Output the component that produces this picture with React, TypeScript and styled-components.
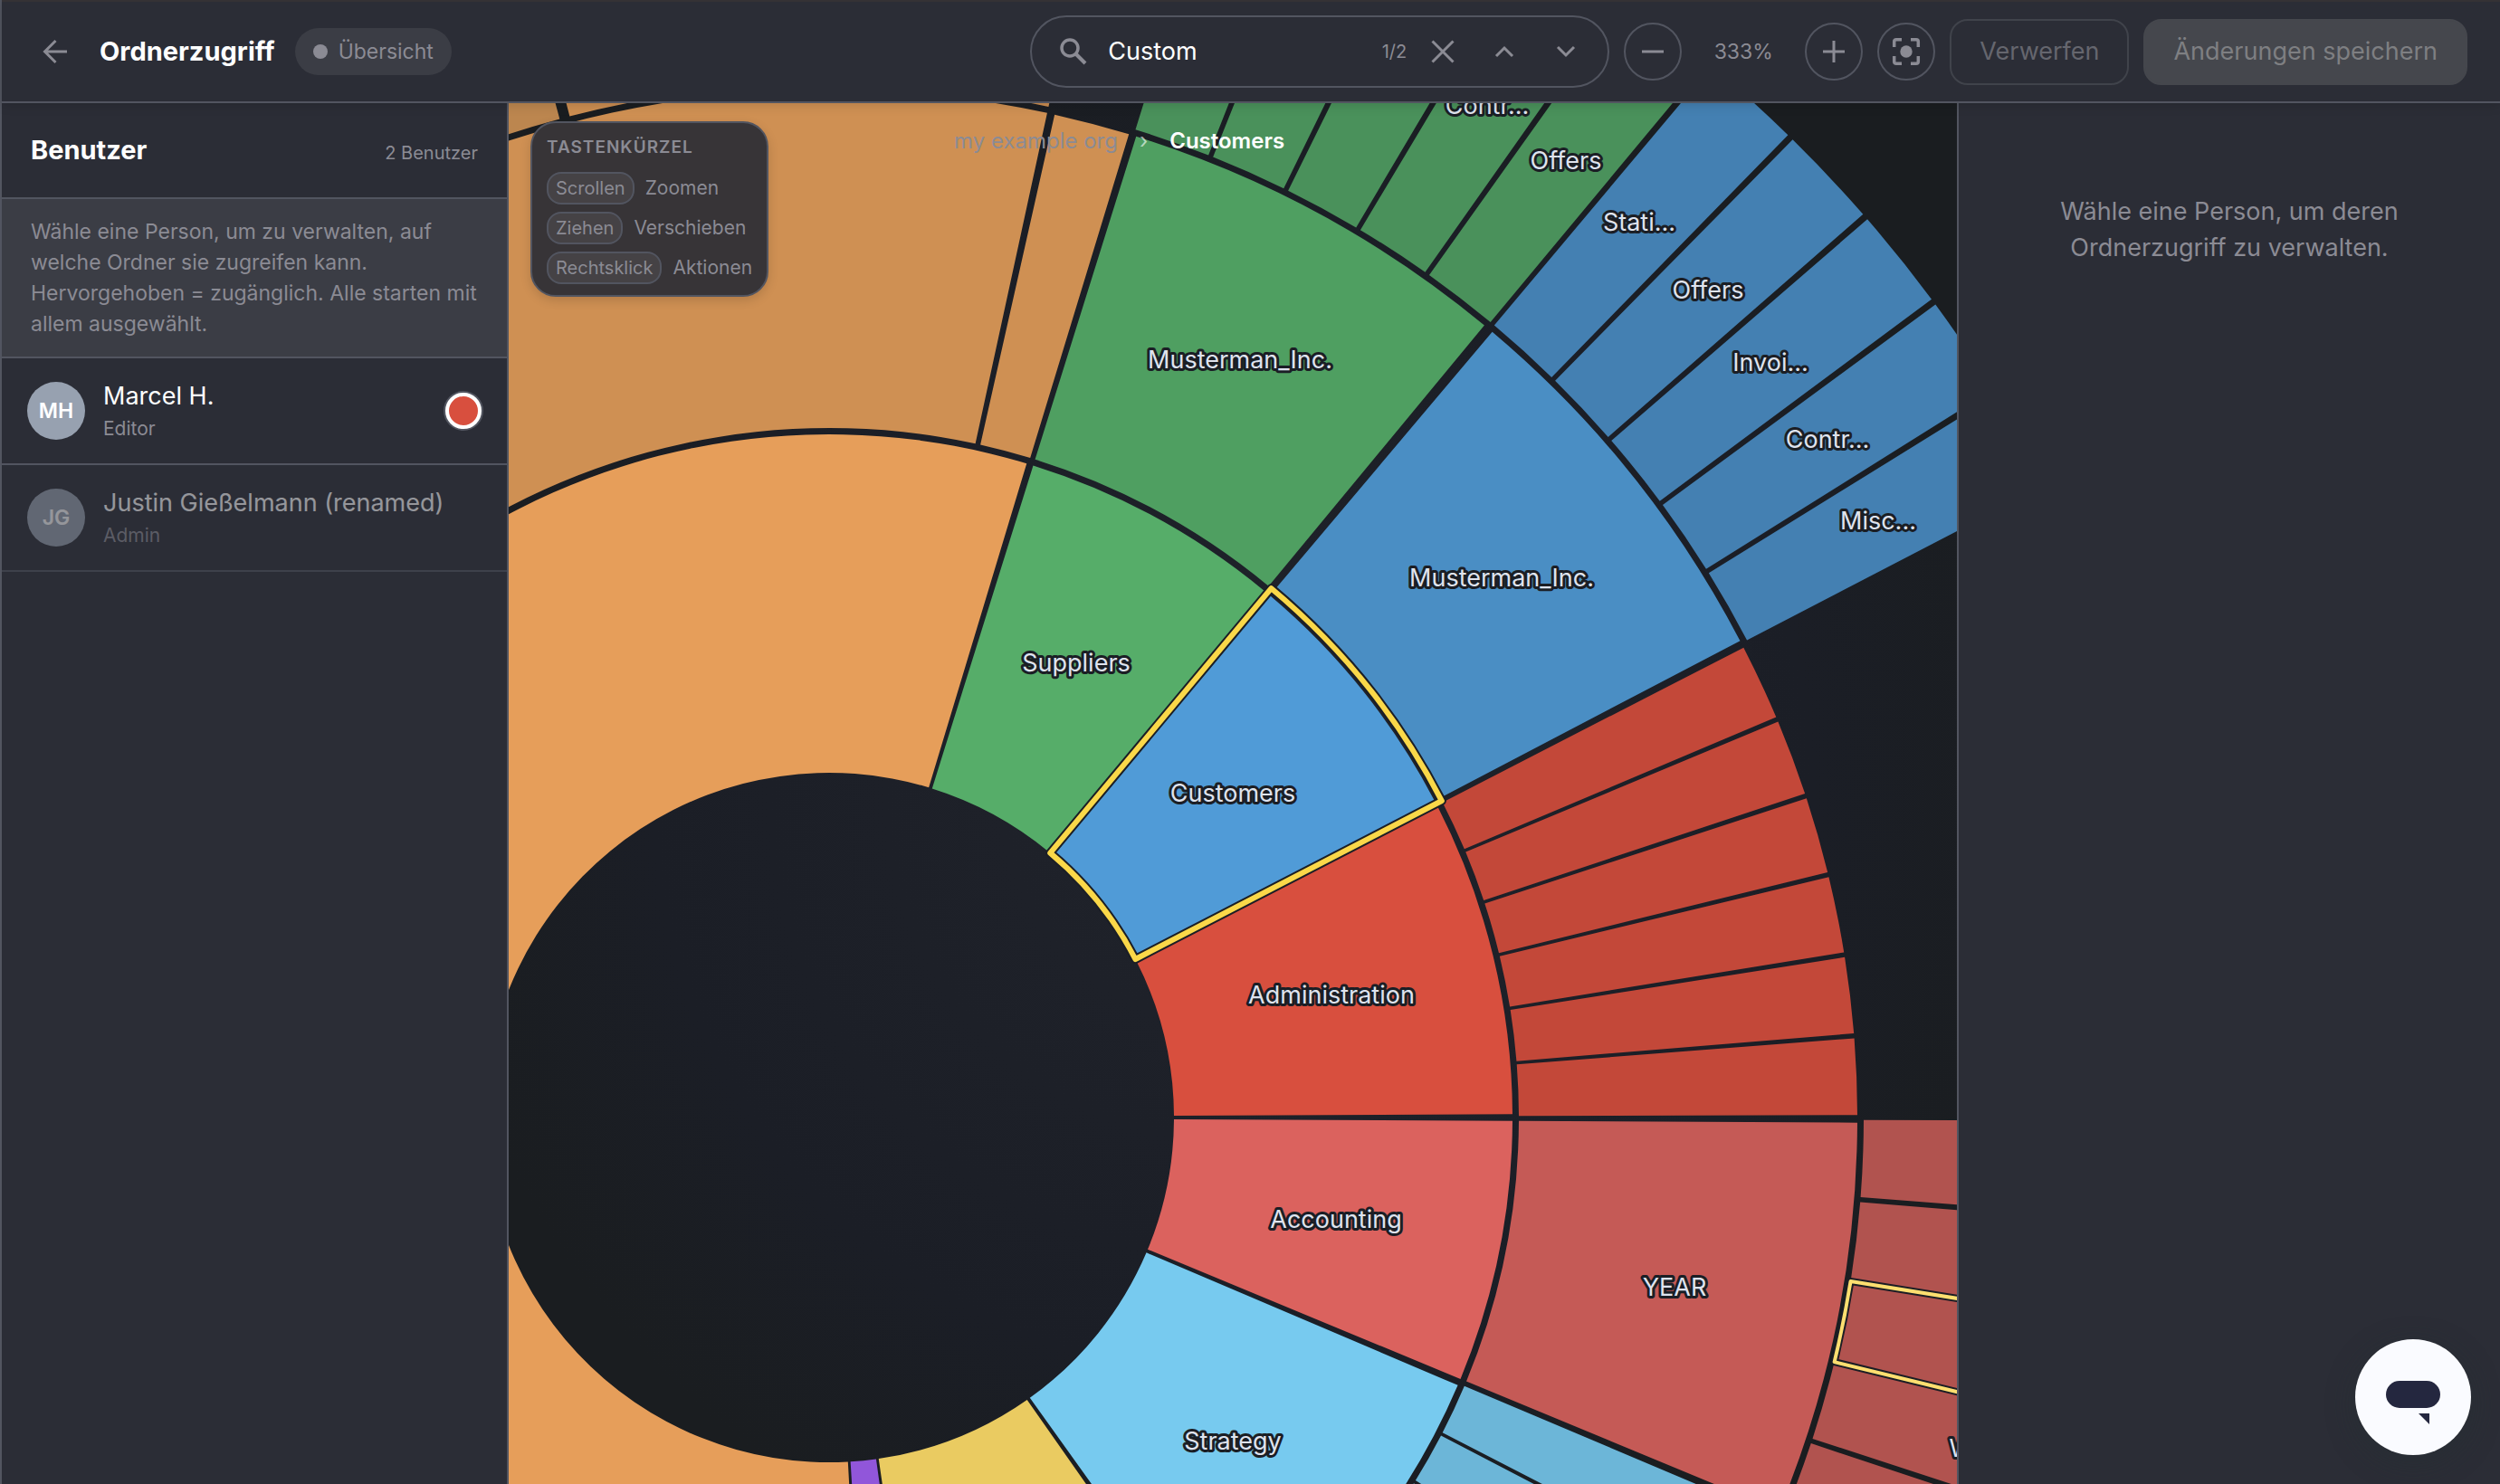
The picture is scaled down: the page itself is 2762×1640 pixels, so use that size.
import React, { useState } from "react";
import styled, { createGlobalStyle } from "styled-components";

const color = {
  panel: "#2b2d36",
  raised: "#3b3d45",
  border: "#525560",
  muted: "#8b8b94",
  text: "#ffffff",
  gap: "#1b1e25",
  match: "#fad849",
};

const GlobalStyle = createGlobalStyle`
  *, *::before, *::after { box-sizing: border-box; }
  body {
    margin: 0;
    background: ${color.panel};
    color: ${color.text};
    font-family: Inter, "Liberation Sans", sans-serif;
    font-size: 27px;
    line-height: 40px;
  }
  button, input { font: inherit; color: inherit; }
  h1, h2, p, ul, dl, dd { margin: 0; padding: 0; }
`;

const Page = styled.div`
  display: flex;
  flex-direction: column;
  height: 100vh;
  border-left: 2px solid ${color.border};
`;

/* ---------- top bar ---------- */

const TopBar = styled.header`
  position: relative;
  z-index: 2;
  display: flex;
  align-items: center;
  justify-content: space-between;
  flex: none;
  height: 114px;
  padding: 0 36px 0 34px;
  background: ${color.panel};
  border-top: 2px solid #353235;
  border-bottom: 2px solid ${color.border};
  box-shadow: 0 2px 12px rgba(0, 0, 0, 0.14);
`;

const TitleGroup = styled.div`
  display: flex;
  align-items: center;
`;

const Title = styled.h1`
  margin: 0 22px 0 24px;
  font-size: 29px;
  font-weight: 700;
`;

const PlainButton = styled.button<{ $width: number }>`
  display: flex;
  align-items: center;
  justify-content: center;
  width: ${(p) => p.$width}px;
  height: 60px;
  padding: 0;
  border: 0;
  background: none;
  color: ${color.muted};
  cursor: pointer;
`;

const StatusPill = styled.span`
  display: flex;
  align-items: center;
  gap: 12px;
  height: 52px;
  padding: 0 20px;
  border-radius: 26px;
  background: ${color.raised};
  color: ${color.muted};
  font-size: 23px;
`;

const StatusDot = styled.span`
  width: 16px;
  height: 16px;
  border-radius: 50%;
  background: ${color.muted};
`;

const Tools = styled.div`
  display: flex;
  align-items: center;
  gap: 16px;
`;

const SearchBox = styled.form`
  display: flex;
  align-items: center;
  gap: 8px;
  width: 640px;
  height: 80px;
  padding: 0 16px 0 30px;
  border: 2px solid ${color.border};
  border-radius: 40px;
  color: ${color.muted};
`;

const SearchLabel = styled.label`
  display: flex;
  flex: none;
  margin-right: 14px;
`;

const SearchInput = styled.input`
  flex: 1;
  min-width: 0;
  padding: 0;
  border: 0;
  outline: 0;
  background: none;
  color: ${color.text};
`;

const MatchCount = styled.output`
  margin-right: 2px;
  font-size: 20px;
`;

const RoundButton = styled.button`
  display: flex;
  align-items: center;
  justify-content: center;
  width: 64px;
  height: 64px;
  padding: 0;
  border: 2px solid ${color.border};
  border-radius: 50%;
  background: none;
  color: ${color.muted};
  cursor: pointer;
`;

const ZoomValue = styled.output`
  width: 104px;
  color: ${color.muted};
  font-size: 23px;
  text-align: center;
`;

const ActionButton = styled.button<{ $filled?: boolean }>`
  height: 73px;
  padding: 0 31px;
  border: 2px solid ${(p) => (p.$filled ? "#45474d" : "#40434b")};
  border-radius: 20px;
  background: ${(p) => (p.$filled ? "#45474d" : "none")};
  color: ${(p) => (p.$filled ? "#7e7f82" : "#65666e")};
`;

/* ---------- body ---------- */

const Body = styled.div`
  display: grid;
  grid-template-columns: 560px minmax(0, 1fr) 600px;
  flex: 1;
  min-height: 0;
`;

const UserPanel = styled.aside`
  border-right: 2px solid ${color.border};
`;

const UserPanelHeader = styled.div`
  display: flex;
  align-items: baseline;
  justify-content: space-between;
  height: 106px;
  padding: 32px 32px 0;
  border-bottom: 2px solid ${color.border};
`;

const PanelTitle = styled.h2`
  font-size: 29px;
  font-weight: 700;
`;

const UserCount = styled.span`
  color: ${color.muted};
  font-size: 20px;
`;

const Hint = styled.p`
  padding: 19px 28px 19px 32px;
  border-bottom: 2px solid ${color.border};
  background: ${color.raised};
  color: ${color.muted};
  font-size: 23px;
  line-height: 34px;
`;

const UserList = styled.ul`
  list-style: none;
`;

const UserButton = styled.button<{ $dimmed: boolean }>`
  display: flex;
  align-items: center;
  gap: 20px;
  width: 100%;
  height: 118px;
  padding: 0 28px;
  border: 0;
  border-bottom: 2px solid ${color.border};
  background: none;
  text-align: left;
  cursor: pointer;
  opacity: ${(p) => (p.$dimmed ? 0.5 : 1)};
`;

const Avatar = styled.span`
  flex: none;
  width: 64px;
  border-radius: 50%;
  background: #97a1b0;
  font-size: 23px;
  font-weight: 600;
  line-height: 64px;
  text-align: center;
`;

const UserText = styled.span`
  display: flex;
  flex: 1;
  flex-direction: column;
`;

const Role = styled.span`
  color: ${color.muted};
  font-size: 21px;
  line-height: 32px;
`;

const Swatch = styled.span`
  width: 40px;
  height: 40px;
  border: 4px solid #ffffff;
  border-radius: 50%;
  background: #d84f3e;
  box-shadow: 0 0 0 2px ${color.border};
`;

const Canvas = styled.main`
  position: relative;
  min-width: 0;
  overflow: hidden;
  background: radial-gradient(circle at 50% 50%, #20232b 0, #1b1e26 640px, #1a1d20 900px);
`;

const Chart = styled.svg`
  display: block;
  width: 100%;
  height: 100%;
`;

const SegmentLabel = styled.text`
  fill: #dfe3ee;
  stroke: ${color.gap};
  stroke-width: 6px;
  stroke-linejoin: round;
  paint-order: stroke;
  font-size: 27px;
  text-anchor: middle;
`;

const Shortcuts = styled.section`
  position: absolute;
  top: 20px;
  left: 24px;
  padding: 14px 16px 12px;
  border: 2px solid ${color.border};
  border-radius: 28px;
  background: #373437;
  color: ${color.muted};
  font-size: 21px;
  box-shadow: 0 4px 12px rgba(0, 0, 0, 0.15);
`;

const ShortcutsTitle = styled.h2`
  margin-bottom: 14px;
  font-size: 19px;
  font-weight: 600;
  letter-spacing: 1px;
  line-height: 26px;
`;

const ShortcutList = styled.dl`
  display: flex;
  flex-direction: column;
  gap: 8px;
`;

const Shortcut = styled.div`
  display: flex;
  align-items: center;
  gap: 12px;
  height: 36px;
`;

const Key = styled.dt`
  padding: 0 8px;
  border: 2px solid ${color.border};
  border-radius: 16px;
  background: #454245;
  font-size: 20px;
  line-height: 32px;
`;

const Breadcrumb = styled.nav`
  position: absolute;
  top: 22px;
  left: 492px;
  display: flex;
  align-items: center;
  gap: 24px;
  color: #8b8b94;
  font-size: 24px;
`;

const Crumb = styled.a`
  color: inherit;
  text-decoration: none;
`;

const CrumbDivider = styled.span`
  color: rgba(255, 255, 255, 0.6);
`;

const CurrentCrumb = styled.span`
  color: ${color.text};
  font-weight: 600;
`;

const DetailPanel = styled.aside`
  padding: 100px 80px;
  border-left: 2px solid ${color.border};
  color: ${color.muted};
  text-align: center;
`;

const ChatButton = styled.button`
  position: fixed;
  right: 32px;
  bottom: 32px;
  z-index: 3;
  width: 128px;
  height: 128px;
  padding: 0;
  border: 0;
  border-radius: 50%;
  background: #fafbff;
  box-shadow: 0 8px 32px rgba(35, 50, 50, 0.35);
  cursor: pointer;
`;

/* ---------- icons ---------- */

type IconProps = { size?: number; stroke?: number; d: string };

function Icon({ size = 32, stroke = 3, d }: IconProps) {
  return (
    <svg width={size} height={size} viewBox="0 0 32 32" fill="none" stroke="currentColor" strokeWidth={stroke} aria-hidden="true">
      <path d={d} />
    </svg>
  );
}

const icons = {
  back: "M29 16H4.500M16.500 4L4.500 16L16.500 28",
  close: "M4.500 4.500L27.500 27.500M27.500 4.500L4.500 27.500",
  up: "M7 21L16 12L25 21",
  down: "M7 11L16 20L25 11",
  minus: "M4 16H28",
  plus: "M4 16H28M16 4V28",
};

function SearchIcon() {
  return (
    <svg width="32" height="32" viewBox="0 0 32 32" fill="none" stroke="currentColor" aria-hidden="true">
      <circle cx="12" cy="12" r="9" strokeWidth="3.5" />
      <path d="M18.500 18.500L29 29" strokeWidth="4" />
    </svg>
  );
}

function FocusIcon() {
  return (
    <svg width="32" height="32" viewBox="0 0 32 32" fill="none" stroke="currentColor" strokeWidth="3.5" aria-hidden="true">
      <path d="M2.700 11V5Q2.700 2.700 5 2.700H11M21 2.700H27Q29.300 2.700 29.300 5V11M29.300 21V27Q29.300 29.300 27 29.300H21M11 29.300H5Q2.700 29.300 2.700 27V21" />
      <circle cx="16" cy="16" r="6.700" fill="currentColor" stroke="none" />
    </svg>
  );
}

/* ---------- sunburst ---------- */

const CENTER = { x: 354, y: 1121 };
const RING = 381;
const RING_GAP = 7;
const LEAVES = 79;
const LEAF = (Math.PI * 2) / LEAVES;

/* Leaves are counted counter-clockwise from three o'clock. */
type Segment = { ring: number; from: number; to: number; fill: string; label?: string };

function point(radius: number, angle: number) {
  const x = CENTER.x + radius * Math.cos(angle);
  const y = CENTER.y - radius * Math.sin(angle);
  return `${x.toFixed(2)} ${y.toFixed(2)}`;
}

function arcPath(inner: number, outer: number, start: number, end: number) {
  const large = end - start > Math.PI ? 1 : 0;
  return [
    `M${point(inner, start)}`,
    `L${point(outer, start)}`,
    `A${outer} ${outer} 0 ${large} 0 ${point(outer, end)}`,
    `L${point(inner, end)}`,
    `A${inner} ${inner} 0 ${large} 1 ${point(inner, start)}`,
    "Z",
  ].join("");
}

function segmentPath({ ring, from, to }: Segment) {
  const pad = Math.min(0.005, (to - from) * LEAF * 0.03);
  return arcPath(ring * RING, (ring + 1) * RING - RING_GAP, from * LEAF + pad, to * LEAF - pad);
}

function leaves(ring: number, first: number, fill: string, labels: (string | undefined)[]): Segment[] {
  return labels.map((label, i) => ({ ring, from: first + i, to: first + i + 1, fill, label }));
}

const blank = (count: number) => Array<undefined>(count).fill(undefined);

const segments: Segment[] = [
  { ring: 1, from: 0, to: 6, fill: "#d84f3e", label: "Administration" },
  { ring: 1, from: 6, to: 11, fill: "#509bd7", label: "Customers" },
  { ring: 1, from: 11, to: 16, fill: "#56ad69", label: "Suppliers" },
  { ring: 1, from: 16, to: 60, fill: "#e69e5a" },
  { ring: 1, from: 60, to: 61, fill: "#9156da" },
  { ring: 1, from: 61, to: 67, fill: "#eacb61" },
  { ring: 1, from: 67, to: 74, fill: "#77caef", label: "Strategy" },
  { ring: 1, from: 74, to: 79, fill: "#db625e", label: "Accounting" },
  ...leaves(2, 0, "#c34839", blank(6)),
  { ring: 2, from: 6, to: 11, fill: "#4a8ec4", label: "Musterman_Inc." },
  { ring: 2, from: 11, to: 16, fill: "#4f9f61", label: "Musterman_Inc." },
  { ring: 2, from: 16, to: 17, fill: "#cf9053" },
  { ring: 2, from: 17, to: 60, fill: "#cf9053" },
  ...leaves(2, 67, "#6cb6d8", blank(7)),
  { ring: 2, from: 74, to: 79, fill: "#c55a56", label: "YEAR" },
  ...leaves(3, 6, "#4480b2", ["Misc...", "Contr...", "Invoi...", "Offers", "Stati..."]),
  ...leaves(3, 11, "#4a915b", ["Offers", "Contr...", undefined, undefined, undefined]),
  { ring: 3, from: 17, to: 23, fill: "#cb8d51" },
  { ring: 3, from: 23, to: 30, fill: "#bc864f" },
  ...leaves(3, 74, "#b1534f", [undefined, "Ware...", undefined, undefined, undefined]),
];

function Match({ ring, from, to, width, stroke }: { ring: number; from: number; to: number; width: number; stroke: string }) {
  const d = arcPath(ring * RING, (ring + 1) * RING, from * LEAF, to * LEAF);
  return (
    <g fill="none" strokeLinejoin="round">
      <path d={d} stroke={color.gap} strokeWidth={width + 4} />
      <path d={d} stroke={stroke} strokeWidth={width} />
    </g>
  );
}

function Sunburst() {
  return (
    <Chart role="img" aria-label="Ordnerstruktur">
      {segments.map((s) => (
        <path key={`${s.ring}-${s.from}`} d={segmentPath(s)} fill={s.fill} />
      ))}
      <Match ring={3} from={76} to={77} width={4} stroke="#fddf70" />
      <Match ring={1} from={6} to={11} width={6} stroke={color.match} />
      {segments
        .filter((s) => s.label)
        .map((s) => {
          const radius = (s.ring + 0.5) * RING;
          const angle = ((s.from + s.to) / 2) * LEAF;
          return (
            <SegmentLabel
              key={`${s.ring}-${s.from}`}
              x={Math.round(CENTER.x + radius * Math.cos(angle))}
              y={Math.round(CENTER.y - radius * Math.sin(angle)) + 9}
            >
              {s.label}
            </SegmentLabel>
          );
        })}
    </Chart>
  );
}

/* ---------- page ---------- */

const users = [
  { initials: "MH", name: "Marcel H.", role: "Editor", access: true },
  { initials: "JG", name: "Justin Gießelmann (renamed)", role: "Admin", access: false },
];

const shortcuts = [
  ["Scrollen", "Zoomen"],
  ["Ziehen", "Verschieben"],
  ["Rechtsklick", "Aktionen"],
];

export default function App() {
  const [query, setQuery] = useState("Custom");

  return (
    <>
      <GlobalStyle />
      <Page>
        <TopBar>
          <TitleGroup>
            <PlainButton $width={50} aria-label="Zurück">
              <Icon d={icons.back} />
            </PlainButton>
            <Title>Ordnerzugriff</Title>
            <StatusPill>
              <StatusDot />
              Übersicht
            </StatusPill>
          </TitleGroup>
          <Tools>
            <SearchBox role="search" onSubmit={(e) => e.preventDefault()}>
              <SearchLabel htmlFor="folder-search" aria-label="Ordner suchen">
                <SearchIcon />
              </SearchLabel>
              <SearchInput id="folder-search" value={query} onChange={(e) => setQuery(e.target.value)} />
              <MatchCount>1/2</MatchCount>
              <PlainButton type="button" $width={60} aria-label="Suche leeren" onClick={() => setQuery("")}>
                <Icon d={icons.close} />
              </PlainButton>
              <PlainButton type="button" $width={60} aria-label="Vorheriger Treffer">
                <Icon d={icons.up} />
              </PlainButton>
              <PlainButton type="button" $width={60} aria-label="Nächster Treffer">
                <Icon d={icons.down} />
              </PlainButton>
            </SearchBox>
            <RoundButton aria-label="Verkleinern">
              <Icon d={icons.minus} />
            </RoundButton>
            <ZoomValue>333%</ZoomValue>
            <RoundButton aria-label="Vergrößern">
              <Icon d={icons.plus} />
            </RoundButton>
            <RoundButton aria-label="Zentrieren">
              <FocusIcon />
            </RoundButton>
            <ActionButton disabled>Verwerfen</ActionButton>
            <ActionButton $filled disabled>
              Änderungen speichern
            </ActionButton>
          </Tools>
        </TopBar>
        <Body>
          <UserPanel>
            <UserPanelHeader>
              <PanelTitle>Benutzer</PanelTitle>
              <UserCount>2 Benutzer</UserCount>
            </UserPanelHeader>
            <Hint>
              Wähle eine Person, um zu verwalten, auf welche Ordner sie zugreifen kann. Hervorgehoben = zugänglich. Alle
              starten mit allem ausgewählt.
            </Hint>
            <UserList>
              {users.map((user) => (
                <li key={user.initials}>
                  <UserButton $dimmed={!user.access}>
                    <Avatar>{user.initials}</Avatar>
                    <UserText>
                      <span>{user.name}</span>
                      <Role>{user.role}</Role>
                    </UserText>
                    {user.access && <Swatch />}
                  </UserButton>
                </li>
              ))}
            </UserList>
          </UserPanel>
          <Canvas>
            <Sunburst />
            <Breadcrumb aria-label="Pfad">
              <Crumb href="#root">my example org</Crumb>
              <CrumbDivider>›</CrumbDivider>
              <CurrentCrumb>Customers</CurrentCrumb>
            </Breadcrumb>
            <Shortcuts>
              <ShortcutsTitle>TASTENKÜRZEL</ShortcutsTitle>
              <ShortcutList>
                {shortcuts.map(([key, action]) => (
                  <Shortcut key={key}>
                    <Key>{key}</Key>
                    <dd>{action}</dd>
                  </Shortcut>
                ))}
              </ShortcutList>
            </Shortcuts>
          </Canvas>
          <DetailPanel>
            <p>Wähle eine Person, um deren Ordnerzugriff zu verwalten.</p>
          </DetailPanel>
        </Body>
      </Page>
      <ChatButton aria-label="Chat öffnen">
        <svg width="128" height="128" viewBox="0 0 128 128" fill="#24273f" aria-hidden="true">
          <rect x="34" y="46" width="60" height="30" rx="15" />
          <path d="M70 82H82V94Z" />
        </svg>
      </ChatButton>
    </>
  );
}
